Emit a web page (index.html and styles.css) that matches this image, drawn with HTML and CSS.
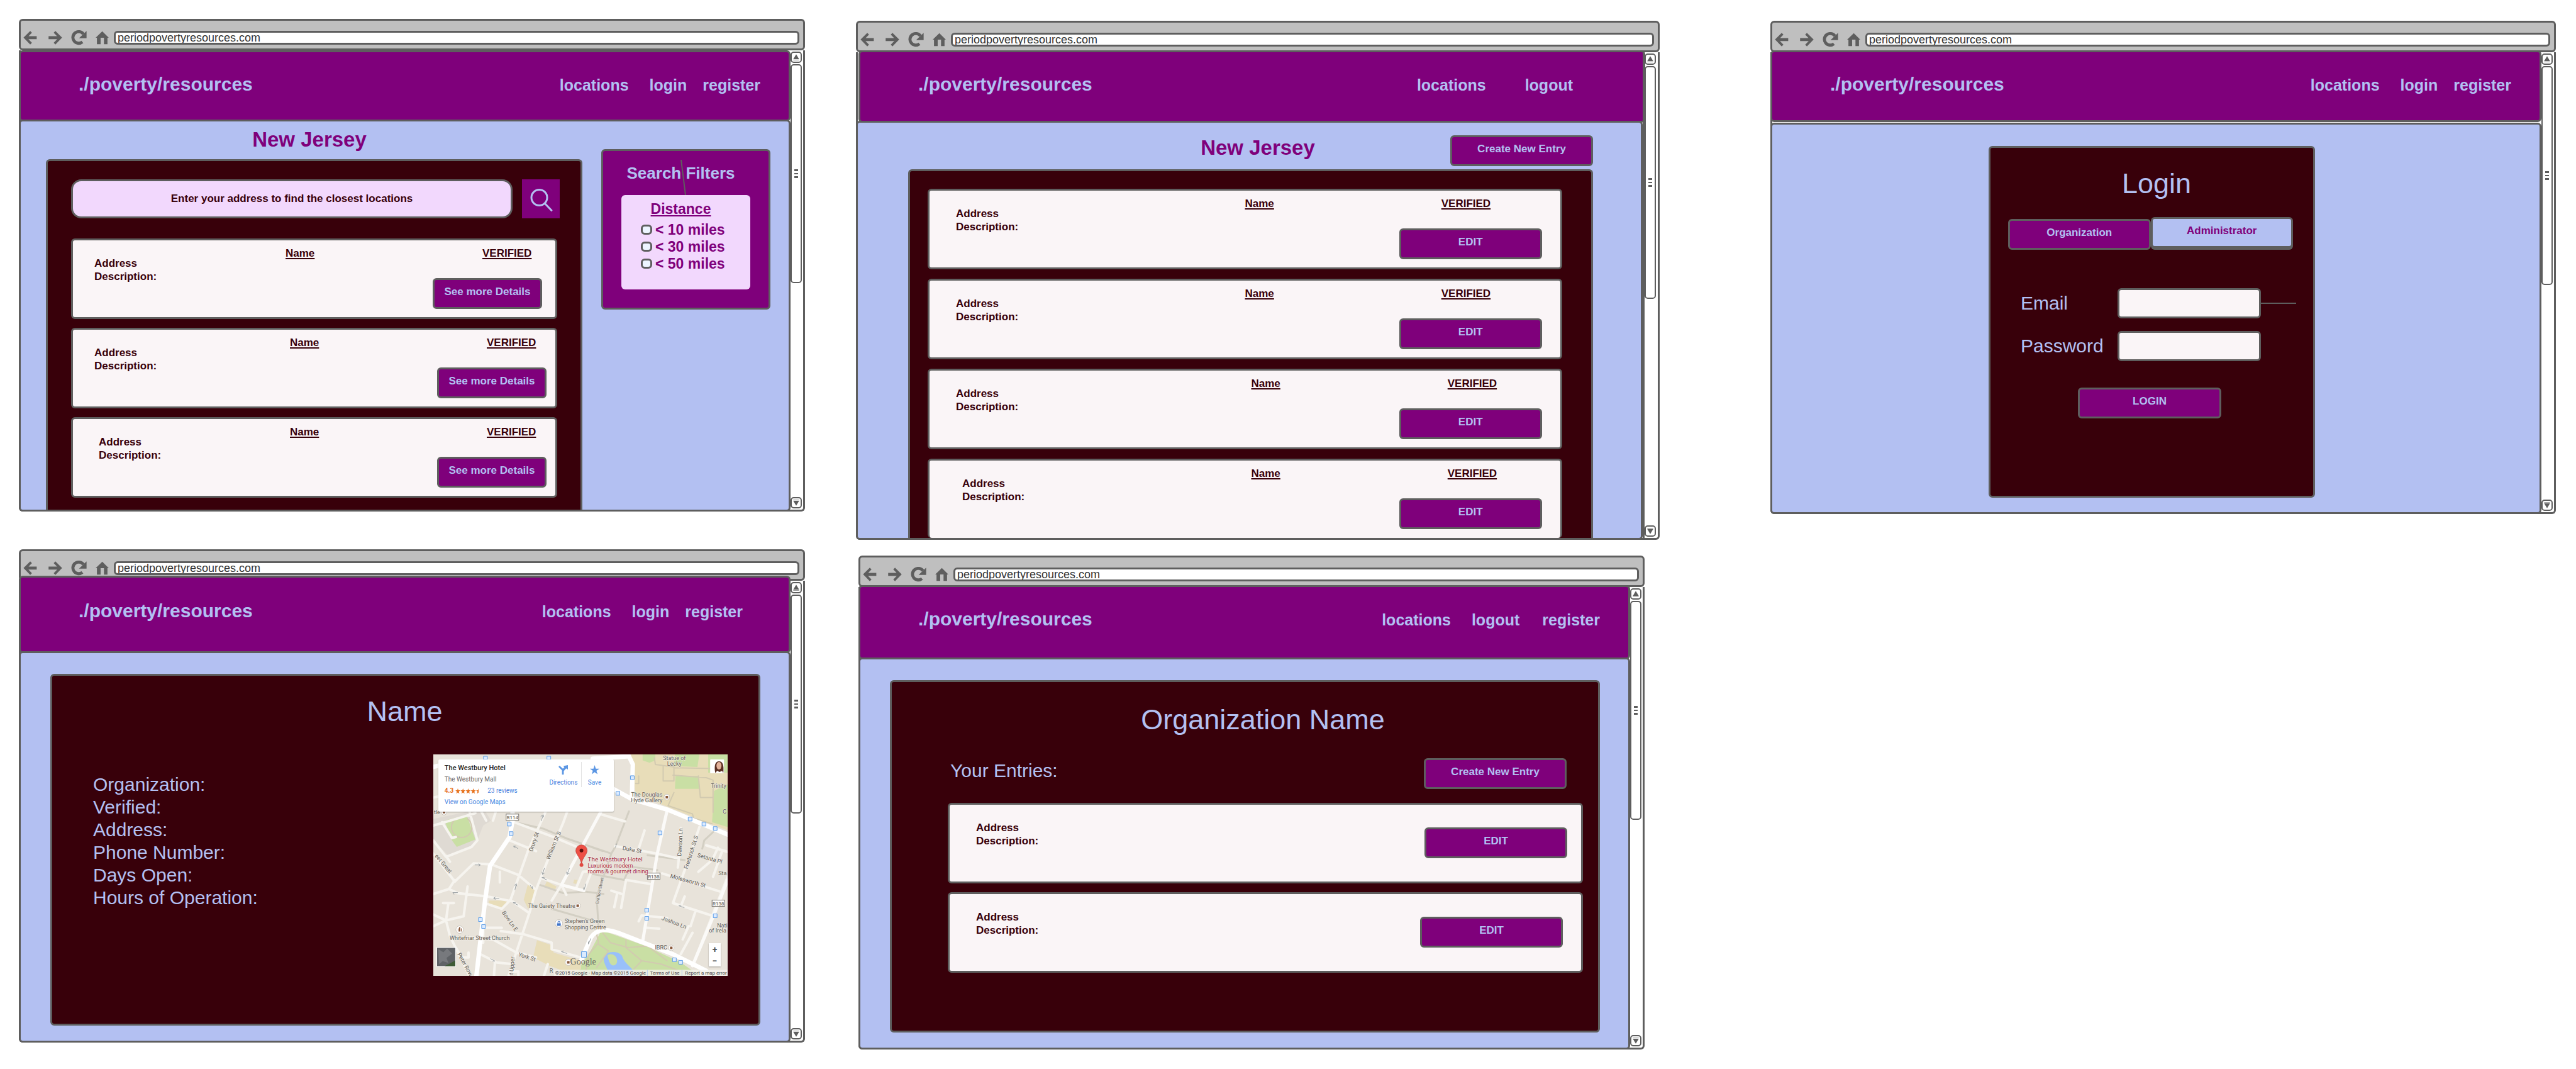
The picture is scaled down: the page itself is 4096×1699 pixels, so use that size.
FILE: index.html
```html
<!DOCTYPE html>
<html lang="en">
<head>
<meta charset="utf-8">
<title>Period poverty resources: wireframes</title>
<link rel="stylesheet" href="styles.css">
</head>
<body>
<svg class="sprite" aria-hidden="true">
  <symbol id="i-back" viewBox="53 95 84 87"><path d="M53 138 95 96 106 107 85 129H136V147H84L106 170 95 181Z"/></symbol>
  <symbol id="i-forward" viewBox="207 95 85 87"><path d="M292 138 250 96 239 107 260 129H207V147H261L239 170 250 181Z"/></symbol>
  <symbol id="i-reload" viewBox="342 91 97 94"><path d="M412 164A36 36 0 1 1 418 115" fill="none" stroke="#5e5e5e" stroke-width="19"/><path d="M438 96V141H391Z"/></symbol>
  <symbol id="i-home" viewBox="493 98 79 80"><path d="M533 99 572 138H564V177H543V138H523V177H501V138H493Z"/></symbol>
  <symbol id="i-up" viewBox="0 0 18 18"><path d="M9 3 15 13H3Z"/><path d="M3 14.500H15" stroke="#5e5e5e"/></symbol>
  <symbol id="i-down" viewBox="0 0 18 18"><path d="M9 15 3 5H15Z"/><path d="M3 3.500H15" stroke="#5e5e5e"/></symbol>
  <symbol id="i-grip" viewBox="0 0 6 14"><path d="M0 0H6V3H0ZM0 6H6V8H0ZM0 11H6V14H0Z"/></symbol>
</svg>

<main class="board">
  <div class="column">

    <section class="window window--results" aria-label="Search results">
      <div class="chrome">
        <button class="tool tool--back" aria-label="Back"><svg><use href="#i-back"/></svg></button>
        <button class="tool tool--forward" aria-label="Forward"><svg><use href="#i-forward"/></svg></button>
        <button class="tool tool--reload" aria-label="Reload"><svg><use href="#i-reload"/></svg></button>
        <button class="tool tool--home" aria-label="Home"><svg><use href="#i-home"/></svg></button>
        <input class="url" type="text" aria-label="Page address" value="periodpovertyresources.com">
      </div>
      <div class="viewport">
        <div class="page">
          <header class="site-header">
            <a class="brand" href="#">./poverty/resources</a>
            <nav class="nav"><a href="#">locations</a><a href="#">login</a><a href="#">register</a></nav>
          </header>
          <div class="content results">
            <div class="results-main">
              <h1 class="state">New Jersey</h1>
              <div class="panel panel--cut">
                <form class="search">
                  <input class="search-box" type="text" aria-label="Your address" placeholder="Enter your address to find the closest locations">
                  <button class="search-button" type="button" aria-label="Search"><svg viewBox="0 0 60 61"><ellipse cx="27.500" cy="28" rx="12.500" ry="12.500"/><path d="M36.500 37.500 47 48.500"/></svg></button>
                </form>
                <ul class="entries">
                  <li class="entry">
                    <p class="entry-info">Address<br>Description:</p>
                    <p class="entry-name">Name</p>
                    <div class="entry-side"><p class="entry-status">VERIFIED</p><button class="btn btn--details">See more Details</button></div>
                  </li>
                  <li class="entry entry--wide">
                    <p class="entry-info">Address<br>Description:</p>
                    <p class="entry-name">Name</p>
                    <div class="entry-side"><p class="entry-status">VERIFIED</p><button class="btn btn--details">See more Details</button></div>
                  </li>
                  <li class="entry entry--wide entry--inset">
                    <p class="entry-info">Address<br>Description:</p>
                    <p class="entry-name">Name</p>
                    <div class="entry-side"><p class="entry-status">VERIFIED</p><button class="btn btn--details">See more Details</button></div>
                  </li>
                </ul>
              </div>
            </div>
            <aside class="filters">
              <svg class="connector" viewBox="0 0 9 56" aria-hidden="true"><path d="M1 0 8 56"/></svg>
              <h2 class="filters-title">Search Filters</h2>
              <div class="filter-group" role="group" aria-labelledby="distance">
                <h3 class="filter-name" id="distance">Distance</h3>
                <label class="filter"><input type="checkbox"> &lt; 10 miles</label>
                <label class="filter"><input type="checkbox"> &lt; 30 miles</label>
                <label class="filter"><input type="checkbox"> &lt; 50 miles</label>
              </div>
            </aside>
          </div>
        </div>
        <div class="scrollbar">
          <button class="scroll-step" aria-label="Scroll up"><svg><use href="#i-up"/></svg></button>
          <div class="thumb"><svg><use href="#i-grip"/></svg></div>
          <button class="scroll-step" aria-label="Scroll down"><svg><use href="#i-down"/></svg></button>
        </div>
      </div>
    </section>

    <section class="window window--detail" aria-label="Location details">
      <div class="chrome">
        <button class="tool tool--back" aria-label="Back"><svg><use href="#i-back"/></svg></button>
        <button class="tool tool--forward" aria-label="Forward"><svg><use href="#i-forward"/></svg></button>
        <button class="tool tool--reload" aria-label="Reload"><svg><use href="#i-reload"/></svg></button>
        <button class="tool tool--home" aria-label="Home"><svg><use href="#i-home"/></svg></button>
        <input class="url" type="text" aria-label="Page address" value="periodpovertyresources.com">
      </div>
      <div class="viewport">
        <div class="page">
          <header class="site-header">
            <a class="brand" href="#">./poverty/resources</a>
            <nav class="nav"><a href="#">locations</a><a href="#">login</a><a href="#">register</a></nav>
          </header>
          <div class="content sheet">
            <div class="panel detail">
              <h1 class="heading">Name</h1>
              <div class="detail-body">
                <ul class="facts">
                  <li>Organization:</li>
                  <li>Verified:</li>
                  <li>Address:</li>
                  <li>Phone Number:</li>
                  <li>Days Open:</li>
                  <li>Hours of Operation:</li>
                </ul>
                <div class="map">
                  <svg class="map-art" viewBox="0 0 469 353" role="img" aria-label="Street map around The Westbury Hotel">
                    <rect width="469" height="353" fill="#e8e3da"/>
                    <g class="ground" transform="scale(.3116 .2627) translate(-35 -39)">
                      <path fill="#dfdad3" d="M35 430 220 384H300L330 440 290 470 260 560 240 600 110 650 35 560Z"/>
                      <path fill="#e8ddb9" d="M1045 39H1540V500L1240 360 1070 280 1050 130Z"/>
                      <path fill="#c9dfa4" d="M1105 39H1170V75L1140 90 1105 75ZM1270 39H1395L1385 115 1265 110ZM1273 170H1392V248H1270ZM1440 39H1540V480L1460 450 1470 260 1540 220V150H1440ZM93 440 205 405 250 555 155 600 130 560Z"/>
                      <path fill="#c9dfa4" d="M895 1105 1120 1200 1300 1300 1400 1383H750L830 1250Z"/>
                      <path fill="#99c0fa" d="M905 1270C915 1230 980 1225 1000 1260 1010 1310 1060 1330 1070 1383H930C935 1340 905 1320 905 1270Z"/>
                      <path fill="#c9dfa4" d="M925 1255C960 1235 985 1280 970 1310 950 1330 935 1315 925 1255Z"/>
                      <path fill="#e8ddb9" d="M565 1165 640 1195 650 1240 790 1290V1340L740 1370 630 1320 545 1270ZM520 820 555 860 550 930 520 975 497 920ZM318 925 415 925 390 970 318 945ZM615 808 665 840 655 865 603 840ZM755 798 772 800 765 825 750 820Z"/>
                      <path class="lane" d="M1210 110V200H1265V110M1265 120 1470 125M1260 165 1430 180 1465 195V390M1390 170 1400 300H1465M1265 270 1235 350 1360 400 1365 425 1460 460M1070 215H1085V170M1165 60 1170 100 1265 115M870 1130 880 1180 830 1250 810 1383M900 1120 940 1180 1030 1210 1130 1200 1230 1290M880 1190 930 1230 870 1330M1020 1165V1210L1100 1290 1060 1340M1100 1290 1200 1310 1290 1350M150 430A52 62 0 1 0 210 430"/>
                      <path class="walk" d="M450 450 600 490 720 550 820 590 945 640 965 600 1035 384M820 590 900 625M945 640 905 780 870 900 880 1100M580 830 700 880 810 870 905 885M640 975 860 1050M830 760 1010 800 1040 720 1180 740M1130 650 1320 680M1410 610 1420 560 1465 510"/>
                      <path class="road" d="M35 470 250 395 M80 450 130 545 150 540M220 384 260 560 230 600 100 660 35 560M100 655 120 690M35 640 145 810 240 700 330 705 470 770 560 860 530 985 420 1380M145 800 115 855 35 885M115 855 160 880 310 900 440 930 525 1000M210 840 190 1020 100 1045 35 1010M85 940H140M112 940 100 1045 120 1140 220 1383M35 1080 100 1045M610 384 520 620 430 920 385 975 310 945M720 384 700 450 640 620 560 860M425 560 560 625M450 450 650 540 790 610M340 440 355 384M280 384 305 440M375 750V815M590 790 690 830 715 890M220 1150 340 1160 460 1240 560 1270M380 1110 500 1130 640 1180 640 1220 790 1270M290 1180 290 1090 385 1090M275 1250 360 1300 440 1310M350 1300 345 1383M150 1210 180 1270 215 1270V1240M885 400 1015 445M965 595 1180 640 1290 670 1285 725M1115 500 1085 610M1300 485 1290 670M1395 480 1350 640 1260 940 1470 1020M1430 590 1540 630M1490 605 1460 680 1390 750M1510 630 1465 780M1205 760 1500 870M1020 800 1150 825M1020 800 995 970M945 865 1000 885M975 880 960 965M1320 900 1300 960M1085 1050 1100 1015 1230 1030M1375 990 1350 1080M1125 1090 1190 1095M1340 1080 1310 1160M1360 1120 1300 1250M765 850 800 750 850 745M860 700 805 865M640 925 690 830M1540 780 1360 1320M35 300 80 290M620 1310 600 1383M440 1355H470V1383"/>
                      <path class="road road--mid" d="M1230 380 1180 640 1105 1175M1540 800 1470 1010 1360 1320M690 830 890 390M690 830 805 865"/>
                      <path class="road road--main" d="M440 384V440L425 540 325 715 300 920 255 1383M35 115 70 105M850 65 1035 50 1055 100 1050 300M950 245 1050 310 1235 375 1540 525M790 1290 840 1150C870 1095 920 1090 1000 1130L1260 1250 1430 1350"/>
                    </g>
                    <g class="arrows"><path d="M66 176h9m-3-2 3 2-3 2M128 146l7 4m-7-4 4 0m-4 0 1 3M174 191l3-10m-3 10-1-4m1 4 3-2M172 106l3-10m0 0-4 3m4-3 1 4M292 142l-2 6M96 229h9m-9 0 3-2m-3 2 3 2M130 216l2-10m0 0-3 3m3-3 1 4M127 236l8 4m-8-4h4M173 196l8 4m-8-4h4M213 191l4-10m-4 10-1-4m1 4 4-2M240 216l3-10m-3 10-1-4M391 241l9 3m-9-3 4-1M247 302l4-9m-4 9v-4M204 314l9 3m-9-3 4-1M91 325l7 4m0 0h-4M154 208l4 6m0 0v-4M31 220h8m-8 0 2 3"/></g>
                    <g class="stops">
                      <path d="M80 3h6v5h-6zM181 3h6v5h-6zM314 34h6v6h-6zM291 59h6v6h-6zM118 108h6v6h-6zM121 123h6v6h-6zM358 122h6v6h-6zM406 100h6v6h-6zM428 108h6v6h-6zM446 115h6v6h-6zM337 245h6v6h-6zM337 258h6v6h-6zM446 254h6v6h-6zM72 260h6v6h-6zM77 271h6v6h-6zM381 324h6v6h-6zM391 328h6v6h-6zM236 314h8v9h-8z"/>
                    </g>
                    <g class="poi">
                      <circle cx="372" cy="68" r="4.500"/><circle cx="230" cy="241" r="4.500"/><circle cx="379" cy="308" r="4.500"/><circle cx="17" cy="92" r="4.500"/><circle cx="200" cy="269" r="6"/><circle cx="42" cy="279" r="6"/><circle cx="215" cy="331" r="5"/>
                    </g>
                    <path fill="#8a5a3c" d="M370 66h4v4h-4zM228 239h4v4h-4zM377 306h4v4h-4zM15 90h4v4h-4zM39 277h1v5h-1zM41 275h2v7h-2zM44 277h1v5h-1zM213 329h4v4h-4z"/>
                    <path fill="#3f73c8" d="M197 269h6v4h-6zM198 269v-2a2 2 0 0 1 4 0v2h-1v-2a1 1 0 0 0-2 0v2z"/>
                    <g class="shields"><rect x="116" y="95" width="20" height="10"/><rect x="341" y="189" width="20" height="10"/><rect x="444" y="232" width="20" height="10"/></g>
                    <g class="label shield-text"><text x="126" y="103">R114</text><text x="351" y="197">R138</text><text x="454" y="240">R138</text></g>
                    <g class="label">
                      <text transform="translate(158 155) rotate(-71)">Drury St</text>
                      <text transform="translate(185 168) rotate(-67)">William St S</text>
                      <text transform="translate(301 152) rotate(10)">Duke St</text>
                      <text transform="translate(395 162) rotate(-87)">Dawson Ln</text>
                      <text transform="translate(405 183) rotate(-72)">Frederick St S</text>
                      <text transform="translate(420 163) rotate(16)">Setanta Pl</text>
                      <text transform="translate(377 196) rotate(16)">Molesworth St</text>
                      <text class="tiny" transform="translate(263 239) rotate(-79)">Grafton Street</text>
                      <text transform="translate(109 252) rotate(55)">Bow Ln E</text>
                      <text transform="translate(363 263) rotate(21)">Joshua Ln</text>
                      <text transform="translate(135 321) rotate(18)">York St</text>
                      <text transform="translate(38 318) rotate(61)">Peter Row</text>
                      <text transform="translate(127 351) rotate(-85)">t Upper</text>
                      <text transform="translate(2 162) rotate(50)">eet Great</text>
                      <text x="1" y="95">tle</text>
                      <text x="384" y="9" text-anchor="middle">Statue of</text>
                      <text x="384" y="18" text-anchor="middle">Lecky</text>
                      <text x="442" y="53">Trinity</text>
                      <text x="365" y="67" text-anchor="end">The Douglas</text>
                      <text x="365" y="76" text-anchor="end">Hyde Gallery</text>
                      <text x="461" y="94">C</text>
                      <text x="454" y="192">Sta</text>
                      <text x="151" y="244">The Gaiety Theatre</text>
                      <text x="209" y="268">Stephen's Green</text>
                      <text x="209" y="278">Shopping Centre</text>
                      <text x="26" y="296">Whitefriar Street Church</text>
                      <text x="353" y="311">IBRC</text>
                      <text x="452" y="275">Nati</text>
                      <text x="439" y="284">of Irela</text>
                      <text x="185" y="348">R</text>
                    </g>
                    <g class="label label--red"><text class="pin-name" x="246" y="170">The Westbury Hotel</text><text x="246" y="180">Luxurious modern</text><text x="246" y="189">rooms &amp; gourmet dining</text></g>
                    <path fill="#ee5045" stroke="#b5332c" stroke-width=".7" d="M236 175C235 164 227 160 227 153a9 9 0 0 1 18 0C245 160 237 164 236 175Z"/>
                    <circle cx="236" cy="153" r="3" fill="#5b0f0c"/><circle cx="236" cy="176" r="3" fill="#e04a40"/>
                    <text x="218" y="335" class="logo">Google</text>
                    <rect x="192" y="343" width="277" height="10" fill="#f5f3ee" opacity=".8"/>
                    <path d="M341 343v10M396 343v10" stroke="#b9cdf0"/>
                    <g class="label label--legal"><text x="194" y="351">©2015 Google - Map data ©2015 Google</text><text x="345" y="351">Terms of Use</text><text x="401" y="351">Report a map error</text></g>
                    <rect x="441" y="8" width="22" height="22" rx="1" fill="#fff"/>
                    <path fill="#5a2f22" d="M449 29C447 18 449 11 455 11s8 6 7 18Z"/><ellipse cx="455" cy="18" rx="4" ry="6" fill="#e3b199"/><path fill="#fff" d="M449 30l3-4 4 2 4-2 2 4Z"/>
                    <rect x="5" y="307" width="31" height="31" fill="#fff"/><rect x="6" y="308" width="29" height="29" fill="#5f6266"/><path fill="#77797d" d="M8 310l8 5 6-6 8 8-9 7 3 8-9-3-6 5Z"/><path fill="#3f5c37" d="M35 328v9H18l8-4Z"/>
                  </svg>
                  <div class="place">
                    <div class="place-text">
                      <strong class="place-name">The Westbury Hotel</strong>
                      <span class="place-line">The Westbury Mall</span>
                      <span class="place-line"><b class="score">4.3</b>
                        <svg class="stars" viewBox="0 0 42 9" aria-label="4.3 of 5 stars"><path id="s" d="M4 0 5 3H8L5.600 5 6.500 8.500 4 6.400 1.500 8.500 2.400 5 0 3H3Z"/><use href="#s" x="8.200"/><use href="#s" x="16.400"/><use href="#s" x="24.600"/><path d="M37 0V6.400L34.500 8.500 35.400 5 33 3H36Z"/></svg>
                        <a href="#">23 reviews</a></span>
                      <a class="place-line" href="#">View on Google Maps</a>
                    </div>
                    <a class="place-action" href="#"><svg viewBox="0 0 16 16"><path d="M9 16H6V9L0 3 2 1 7.500 6 10 3.500 8 1.500 16 0V7.500L13 5.500 9 10Z"/></svg>Directions</a>
                    <a class="place-action place-action--save" href="#"><svg viewBox="0 0 16 16"><path d="M8 0 10 6H16L11 9.500 13 15.500 8 12 3 15.500 5 9.500 0 6H6Z"/></svg>Save</a>
                  </div>
                  <div class="zoom"><button aria-label="Zoom in">+</button><button aria-label="Zoom out">−</button></div>
                </div>
              </div>
            </div>
          </div>
        </div>
        <div class="scrollbar">
          <button class="scroll-step" aria-label="Scroll up"><svg><use href="#i-up"/></svg></button>
          <div class="thumb"><svg><use href="#i-grip"/></svg></div>
          <button class="scroll-step" aria-label="Scroll down"><svg><use href="#i-down"/></svg></button>
        </div>
      </div>
    </section>
  </div>

  <div class="column column--middle">

    <section class="window window--admin" aria-label="Administrator list">
      <div class="chrome">
        <button class="tool tool--back" aria-label="Back"><svg><use href="#i-back"/></svg></button>
        <button class="tool tool--forward" aria-label="Forward"><svg><use href="#i-forward"/></svg></button>
        <button class="tool tool--reload" aria-label="Reload"><svg><use href="#i-reload"/></svg></button>
        <button class="tool tool--home" aria-label="Home"><svg><use href="#i-home"/></svg></button>
        <input class="url" type="text" aria-label="Page address" value="periodpovertyresources.com">
      </div>
      <div class="viewport">
        <div class="page">
          <header class="site-header">
            <a class="brand" href="#">./poverty/resources</a>
            <nav class="nav"><a href="#">locations</a><a href="#">logout</a></nav>
          </header>
          <div class="content admin">
            <div class="admin-top">
              <h1 class="state">New Jersey</h1>
              <button class="btn">Create New Entry</button>
            </div>
            <div class="panel panel--cut">
              <ul class="entries">
                <li class="entry">
                  <p class="entry-info">Address<br>Description:</p>
                  <p class="entry-name">Name</p>
                  <div class="entry-side"><p class="entry-status">VERIFIED</p><button class="btn">EDIT</button></div>
                </li>
                <li class="entry">
                  <p class="entry-info">Address<br>Description:</p>
                  <p class="entry-name">Name</p>
                  <div class="entry-side"><p class="entry-status">VERIFIED</p><button class="btn">EDIT</button></div>
                </li>
                <li class="entry entry--wide">
                  <p class="entry-info">Address<br>Description:</p>
                  <p class="entry-name">Name</p>
                  <div class="entry-side"><p class="entry-status">VERIFIED</p><button class="btn">EDIT</button></div>
                </li>
                <li class="entry entry--wide entry--inset">
                  <p class="entry-info">Address<br>Description:</p>
                  <p class="entry-name">Name</p>
                  <div class="entry-side"><p class="entry-status">VERIFIED</p><button class="btn">EDIT</button></div>
                </li>
              </ul>
            </div>
          </div>
        </div>
        <div class="scrollbar">
          <button class="scroll-step" aria-label="Scroll up"><svg><use href="#i-up"/></svg></button>
          <div class="thumb"><svg><use href="#i-grip"/></svg></div>
          <button class="scroll-step" aria-label="Scroll down"><svg><use href="#i-down"/></svg></button>
        </div>
      </div>
    </section>

    <section class="window window--org" aria-label="Organization entries">
      <div class="chrome">
        <button class="tool tool--back" aria-label="Back"><svg><use href="#i-back"/></svg></button>
        <button class="tool tool--forward" aria-label="Forward"><svg><use href="#i-forward"/></svg></button>
        <button class="tool tool--reload" aria-label="Reload"><svg><use href="#i-reload"/></svg></button>
        <button class="tool tool--home" aria-label="Home"><svg><use href="#i-home"/></svg></button>
        <input class="url" type="text" aria-label="Page address" value="periodpovertyresources.com">
      </div>
      <div class="viewport">
        <div class="page">
          <header class="site-header">
            <a class="brand" href="#">./poverty/resources</a>
            <nav class="nav"><a href="#">locations</a><a href="#">logout</a><a href="#">register</a></nav>
          </header>
          <div class="content sheet">
            <div class="panel org">
              <h1 class="heading">Organization Name</h1>
              <div class="org-body">
                <div class="org-bar"><h2 class="org-title">Your Entries:</h2><button class="btn">Create New Entry</button></div>
                <ul class="entries">
                  <li class="entry entry--plain"><p class="entry-info">Address<br>Description:</p><button class="btn">EDIT</button></li>
                  <li class="entry entry--plain entry--tight"><p class="entry-info">Address<br>Description:</p><button class="btn">EDIT</button></li>
                </ul>
              </div>
            </div>
          </div>
        </div>
        <div class="scrollbar">
          <button class="scroll-step" aria-label="Scroll up"><svg><use href="#i-up"/></svg></button>
          <div class="thumb"><svg><use href="#i-grip"/></svg></div>
          <button class="scroll-step" aria-label="Scroll down"><svg><use href="#i-down"/></svg></button>
        </div>
      </div>
    </section>
  </div>

  <div class="column column--last">

    <section class="window window--login" aria-label="Login">
      <div class="chrome">
        <button class="tool tool--back" aria-label="Back"><svg><use href="#i-back"/></svg></button>
        <button class="tool tool--forward" aria-label="Forward"><svg><use href="#i-forward"/></svg></button>
        <button class="tool tool--reload" aria-label="Reload"><svg><use href="#i-reload"/></svg></button>
        <button class="tool tool--home" aria-label="Home"><svg><use href="#i-home"/></svg></button>
        <input class="url" type="text" aria-label="Page address" value="periodpovertyresources.com">
      </div>
      <div class="viewport">
        <div class="page">
          <header class="site-header">
            <a class="brand" href="#">./poverty/resources</a>
            <nav class="nav"><a href="#">locations</a><a href="#">login</a><a href="#">register</a></nav>
          </header>
          <div class="content login">
            <div class="panel login-panel">
              <h1 class="heading">Login</h1>
              <div class="tabs">
                <button class="btn tab">Organization</button>
                <button class="btn tab tab--on">Administrator</button>
              </div>
              <form class="login-form">
                <div class="field field--linked"><label for="email">Email</label><input id="email" type="email"></div>
                <div class="field"><label for="password">Password</label><input id="password" type="password"></div>
                <button class="btn login-button" type="button">LOGIN</button>
              </form>
            </div>
          </div>
        </div>
        <div class="scrollbar">
          <button class="scroll-step" aria-label="Scroll up"><svg><use href="#i-up"/></svg></button>
          <div class="thumb"><svg><use href="#i-grip"/></svg></div>
          <button class="scroll-step" aria-label="Scroll down"><svg><use href="#i-down"/></svg></button>
        </div>
      </div>
    </section>
  </div>
</main>
</body>
</html>
```
FILE: styles.css
```css
:root {
  --line: #5e5e5e;
  --purple: #7f007b;
  --blue: #b3c0f2;
  --maroon: #38000a;
  --paper: #faf5f7;
  --pink: #f2d8fd;
  --edge: 3px solid var(--line);
}

* { box-sizing: border-box; margin: 0; padding: 0; }

body {
  background: #fff;
  color: var(--maroon);
  font-family: "Liberation Sans", Arial, sans-serif;
}

button, input { font: inherit; color: inherit; }
button { background: none; border: 0; }
ul { list-style: none; }
a { color: inherit; text-decoration: none; }
.sprite { position: absolute; width: 0; height: 0; }

/* Canvas with the five windows */
.board {
  display: grid;
  grid-template-columns: 1250fr 1278fr 1344fr;
  column-gap: 81px;
  align-items: start;
  padding: 30px 32px 30px 30px;
}
.column { display: flex; flex-direction: column; gap: 60px; }
.column--middle { gap: 25px; padding-top: 3px; }
.column--last { padding: 3px 0 0 95px; }

/* Browser window */
.chrome {
  display: flex;
  align-items: center;
  height: 50px;
  padding: 10px 6px 0 4px;
  background: #bfbfbf;
  border: var(--edge);
  border-radius: 6px;
}
.tool { display: flex; height: 22px; margin-right: 14px; fill: var(--line); }
.tool svg { width: 100%; height: 100%; }
.tool--back { width: 22px; margin-right: 18px; }
.tool--forward { width: 22px; }
.tool--reload { width: 25px; height: 24px; }
.tool--home { width: 21px; margin-right: 8px; }
.url {
  flex: 1;
  min-width: 0;
  height: 22px;
  padding: 0 3px;
  background: #fff;
  border: var(--edge);
  border-radius: 6px;
  color: #333;
  font-size: 18px;
  line-height: 16px;
}

.viewport {
  display: flex;
  border: var(--edge);
  border-top: 0;
  border-radius: 0 0 6px 6px;
}
.page {
  flex: 1;
  display: flex;
  flex-direction: column;
  min-width: 0;
  margin: 0 0 -3px -3px;
}
.scrollbar {
  flex: 0 0 20px;
  display: flex;
  flex-direction: column;
  gap: 2px;
  padding: 2px 2px 2px 0;
}
.scroll-step {
  display: flex;
  width: 18px;
  height: 18px;
  border: 2px solid var(--line);
  border-radius: 5px;
  fill: var(--line);
}
.scroll-step svg { width: 14px; height: 14px; }
.scroll-step:last-child { margin-top: auto; }
.thumb {
  display: flex;
  align-items: center;
  justify-content: center;
  width: 18px;
  height: 348px;
  border: 2px solid var(--line);
  border-radius: 5px;
  fill: var(--line);
}
.thumb svg { width: 6px; height: 14px; }

.site-header {
  display: flex;
  justify-content: space-between;
  align-items: baseline;
  height: 113px;
  padding: 33px 45px 0 92px;
  background: var(--purple);
  border: var(--edge);
  border-radius: 6px;
  color: var(--blue);
  font-weight: bold;
}
.brand { font-size: 30px; line-height: 36px; }
.nav { display: flex; gap: 25px; font-size: 25px; line-height: 28px; }
.nav a:first-child { margin-right: 8px; }

.content {
  flex: 1;
  margin-top: -3px;
  background: var(--blue);
  border: var(--edge);
  border-radius: 6px;
}
.sheet { padding: 33px 45px 24px 47px; }
.panel {
  background: var(--maroon);
  border: var(--edge);
  border-radius: 6px;
  color: var(--blue);
}
.panel--cut { border-bottom: 0; border-radius: 6px 6px 0 0; }
.state { color: var(--purple); font-size: 33px; line-height: 40px; }
.heading { font-size: 45px; font-weight: normal; line-height: 52px; text-align: center; }

.btn {
  width: 227px;
  height: 49px;
  padding-bottom: 6px;
  background: var(--purple);
  border: var(--edge);
  border-radius: 6px;
  color: var(--blue);
  font-size: 17px;
  font-weight: bold;
}
.btn--details { width: 174px; }

/* Entry cards */
.entries { display: flex; flex-direction: column; gap: 14px; }
.entry {
  display: grid;
  align-items: start;
  height: 128px;
  padding-top: 10px;
  background: var(--paper);
  border: var(--edge);
  border-radius: 6px;
  color: var(--maroon);
  font-size: 17px;
  font-weight: bold;
  line-height: 21px;
}
.entry-info { padding: 16px 0 0 34px; }
.entry-name, .entry-status { text-decoration: underline 2px; text-underline-offset: 2px; }
.entry-side .btn { display: block; margin-top: 29px; }
.entry--plain { display: flex; justify-content: space-between; padding-right: 22px; }
.entry--plain .btn { margin-top: 26px; }
.entry--tight { padding-right: 29px; }

/* Search results */
.results { display: grid; grid-template-columns: 853fr 269fr; gap: 30px; align-items: start; padding: 9px 29px 0 40px; }
.results .state { padding-right: 15px; text-align: center; }
.results .panel { margin-top: 11px; padding: 29px 37px 19px; }
.results .entry { grid-template-columns: 338fr 234fr 195fr; }
.results .entry-status { padding-left: 79px; }
.results .entry--wide { grid-template-columns: 345fr 234fr 188fr; }
.results .entry--inset .entry-info { padding-left: 41px; }

.search { display: flex; gap: 15px; margin: 0 -4px 32px 0; }
.search-box {
  flex: 1;
  min-width: 0;
  height: 62px;
  background: var(--pink);
  border: var(--edge);
  border-radius: 16px;
  font-size: 17px;
  font-weight: bold;
  text-align: center;
}
.search-box::placeholder { color: var(--maroon); opacity: 1; }
.search-button { width: 60px; height: 62px; background: var(--purple); }
.search-button svg { display: block; width: 60px; height: 61px; fill: none; stroke: var(--blue); stroke-width: 3; stroke-linecap: round; }

.filters {
  position: relative;
  margin-top: 35px;
  padding: 20px 29px 29px;
  background: var(--purple);
  border: var(--edge);
  border-radius: 6px;
}
.filters-title { padding-right: 16px; color: var(--blue); font-size: 26px; line-height: 30px; text-align: center; white-space: nowrap; }
.connector { position: absolute; top: 14px; left: 123px; width: 9px; height: 56px; fill: none; stroke: var(--line); stroke-width: 2; }
.filter-group {
  margin-top: 20px;
  padding: 9px 0 27px 31px;
  background: var(--pink);
  border-radius: 6px;
  color: var(--purple);
  font-size: 23px;
  font-weight: bold;
  line-height: 27px;
}
.filter-name { margin-bottom: 6px; padding-right: 47px; font-size: 23px; text-align: center; text-decoration: underline; }
.filter { display: flex; align-items: baseline; gap: 5px; white-space: nowrap; }
.filter input { appearance: none; width: 18px; height: 16px; background: #edf5ff; border: var(--edge); border-radius: 6px; }

/* Administrator list */
.window--admin .site-header { height: 115px; margin: -3px -4px 0 4px; }
.window--admin .nav { gap: 54px; padding-right: 67px; }
.window--admin .scrollbar { flex-basis: 24px; border-left: var(--edge); }
.window--admin .thumb { height: 370px; }
.admin { padding: 20px 76px 0 80px; }
.admin-top { display: grid; grid-template-columns: 1fr auto 1fr; padding-left: 23px; }
.admin-top .state { grid-column: 2; }
.admin-top .btn { justify-self: end; }
.admin .panel { margin-top: 5px; padding: 28px 46px 0 28px; }
.admin .entries { gap: 15px; }
.admin .entry { grid-template-columns: 501fr 245fr 256fr; }
.admin .entry-info { padding-left: 42px; }
.admin .entry-status { padding-left: 67px; }
.admin .entry--wide .entry-name { padding-left: 10px; }
.admin .entry--wide .entry-status { padding-left: 77px; }
.admin .entry--inset .entry-info { padding-left: 52px; }
.admin .entry:last-child { height: 126px; border-bottom: 0; }

/* Organization entries */
.window--org { margin: 0 24px 0 4px; }
.window--org .site-header { height: 118px; margin-top: -3px; }
.window--org .nav a:last-child { margin-left: 11px; }
.org { padding: 34px 24px 92px 89px; }
.org .heading { padding-right: 8px; }
.org-bar { display: flex; justify-content: space-between; margin: 35px 26px 22px 4px; }
.org-title { font-size: 30px; font-weight: normal; line-height: 40px; }
.org .entry-info { padding-left: 42px; }

/* Location details */
.window--detail .site-header { height: 123px; margin-top: -8px; padding-right: 73px; padding-top: 35px; }
.detail { padding: 31px 49px 76px 65px; }
.detail .heading { padding-right: 18px; }
.detail-body { display: flex; justify-content: space-between; align-items: flex-start; margin-top: 42px; }
.facts { padding-top: 30px; font-size: 30px; line-height: 36px; }
.map { position: relative; width: 46.400%; font-family: Roboto, sans-serif; }
.map-art { display: block; width: 100%; height: auto; }
.ground path { vector-effect: non-scaling-stroke; }
.lane, .walk, .road { fill: none; stroke-linecap: round; stroke-linejoin: round; }
.lane { stroke: #d2cab0; stroke-width: 2px; }
.walk { stroke: #d3cfc3; stroke-width: 3px; }
.road { stroke: #f6f4ef; stroke-width: 4px; }
.road--mid { stroke: #fbfaf8; stroke-width: 5px; }
.road--main { stroke: #fff; stroke-width: 7px; }
.arrows { fill: none; stroke: #9aa0a3; }
.stops { fill: #dcebff; stroke: #5c9ee8; }
.poi { fill: #fff; stroke: #c9c4bb; }
.shields { fill: #fff; stroke: #77736c; }
.label { fill: #5f5b54; font-size: 9px; }
.label text { paint-order: stroke; stroke: #f1eee8; stroke-width: 1px; }
.label .tiny { font-size: 7px; }
.label .pin-name { font-size: 10px; }
.shield-text { font-size: 8px; text-anchor: middle; }
.label--red { fill: #a8283a; }
.label--legal { fill: #444; font-size: 8px; }
.logo { fill: #6e6a63; font-family: "Liberation Serif", serif; font-size: 14px; }
.place {
  position: absolute;
  top: 8px;
  left: 8px;
  display: flex;
  width: 279px;
  height: 83px;
  padding: 4px 10px;
  background: #fff;
  border-radius: 2px;
  box-shadow: 0 1px 2px rgba(0, 0, 0, .3);
  color: #666;
  font-size: 10px;
  line-height: 18px;
}
.place a { color: #4a86e0; }
.place-text { display: flex; flex-direction: column; width: 170px; }
.place-name { color: #222; font-size: 11px; font-weight: 500; line-height: 19px; }
.place-line { display: flex; align-items: center; gap: 3px; }
.score { color: #e7711b; }
.stars { width: 42px; height: 9px; margin-right: 6px; fill: #e7711b; }
.place-action { display: flex; flex-direction: column; align-items: center; width: 60px; height: 40px; padding-top: 4px; }
.place-action--save { width: 44px; border-left: 1px solid #e2e2e2; }
.place-action svg { flex: none; width: 15px; height: 15px; margin-top: 1px; margin-bottom: 4px; fill: #5b96e3; }
.zoom {
  position: absolute;
  right: 11px;
  bottom: 15px;
  display: flex;
  flex-direction: column;
  width: 19px;
  height: 37px;
  background: #fff;
  box-shadow: 0 1px 2px rgba(0, 0, 0, .3);
  color: #555;
}
.zoom button { flex: 1; font-size: 14px; font-weight: bold; line-height: 16px; }

/* Login */
.window--login .site-header { height: 114px; margin-top: -3px; }
.login { margin-top: 1px; padding: 34px 13px 23px 0; }
.login-panel { width: 43%; margin: 0 auto; padding: 31px 32px 123px 28px; }
.login-panel .heading { padding-left: 19px; }
.tabs { display: flex; align-items: flex-start; margin-top: 27px; }
.tab { flex: 1; margin-top: 3px; }
.tab--on { margin-top: 0; background: var(--blue); box-shadow: 0 3px 0 var(--line); color: var(--purple); }
.login-form { display: flex; flex-direction: column; gap: 20px; padding: 61px 51px 0 20px; }
.field { position: relative; display: flex; justify-content: space-between; align-items: center; font-size: 30px; line-height: 36px; }
.field input {
  width: 228px;
  height: 48px;
  background: var(--paper);
  border: var(--edge);
  border-radius: 6px;
}
.field--linked::after {
  content: "";
  position: absolute;
  top: 23px;
  left: 100%;
  width: 56px;
  height: 2px;
  background: var(--line);
}
.login-button { width: 228px; margin: 22px 0 0 91px; }
```
